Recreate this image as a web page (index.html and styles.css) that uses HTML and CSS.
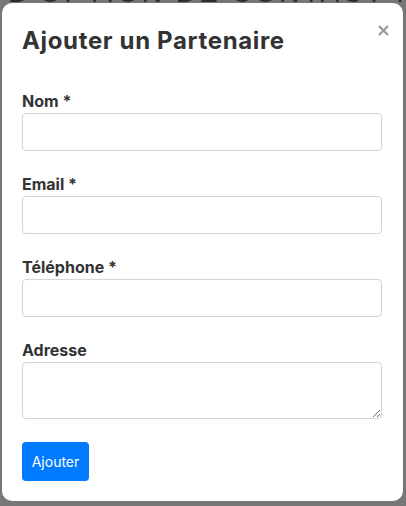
FILE: index.html
```html
<!DOCTYPE html>
<html lang="fr">
<head>
<meta charset="utf-8">
<link rel="stylesheet" href="styles.css">
</head>
<body>
<div class="backdrop-text">D'OPTION DE CONTACT : MOTT PA</div>
<div class="modal">
  <div class="modal-header">
    <h2 class="modal-title">Ajouter un Partenaire</h2>
    <svg class="close" width="11" height="11" viewBox="0 0 11 11" aria-label="Fermer">
      <path d="M1 1 L10 10 M10 1 L1 10" stroke="#9a9a9a" stroke-width="2.2" stroke-linecap="butt"/>
    </svg>
  </div>
  <form class="form">
    <div class="group">
      <label class="label">Nom *</label>
      <input class="field" type="text">
    </div>
    <div class="group">
      <label class="label">Email *</label>
      <input class="field" type="text">
    </div>
    <div class="group">
      <label class="label">Téléphone *</label>
      <input class="field" type="text">
    </div>
    <div class="group">
      <label class="label">Adresse</label>
      <textarea class="field area"></textarea>
    </div>
    <div class="actions">
      <button class="btn" type="button">Ajouter</button>
    </div>
  </form>
</div>
</body>
</html>
```
FILE: styles.css
```css
html, body {
  margin: 0;
  height: 100%;
  overflow: hidden;
}
body {
  background: #777777;
  font-family: Inter, "Noto Sans", sans-serif;
  position: relative;
}
.backdrop-text {
  font-family: "Liberation Sans", sans-serif;
  font-size: 28px;
  line-height: 28px;
  color: #2e2e2e;
  white-space: nowrap;
  margin-top: -21px;
  margin-left: 8px;
  letter-spacing: 3px;
}
.modal {
  position: absolute;
  z-index: 1;
  left: 2px;
  top: 3px;
  width: 401px;
  height: 498px;
  box-sizing: border-box;
  background: #fff;
  border-radius: 10px;
  padding: 20px;
}
.modal-header {
  display: flex;
  justify-content: space-between;
  align-items: flex-start;
}
.modal-title {
  margin: 0;
  font-size: 24px;
  line-height: 36px;
  font-weight: 700;
  color: #333;
  letter-spacing: 0.65px;
}
.close {
  display: block;
  margin-top: 2px;
  margin-right: -6px;
}
.form {
  margin-top: 32px;
  display: flex;
  flex-direction: column;
  gap: 23px;
}
.group {
  display: flex;
  flex-direction: column;
}
.label {
  font-size: 16px;
  line-height: 20px;
  font-weight: 700;
  color: #333;
  margin-bottom: 2px;
}
.field {
  box-sizing: border-box;
  width: 360px;
  height: 38px;
  border: 1px solid #d4d4d4;
  border-radius: 4px;
  background: #fff;
  margin: 0;
  font-family: inherit;
}
.area {
  height: 57px;
  resize: vertical;
}
.btn {
  display: block;
  background: #007bff;
  color: #fff;
  border: none;
  border-radius: 4px;
  font-family: inherit;
  font-size: 14px;
  height: 39px;
  width: 67px;
  padding: 0;
}
```
